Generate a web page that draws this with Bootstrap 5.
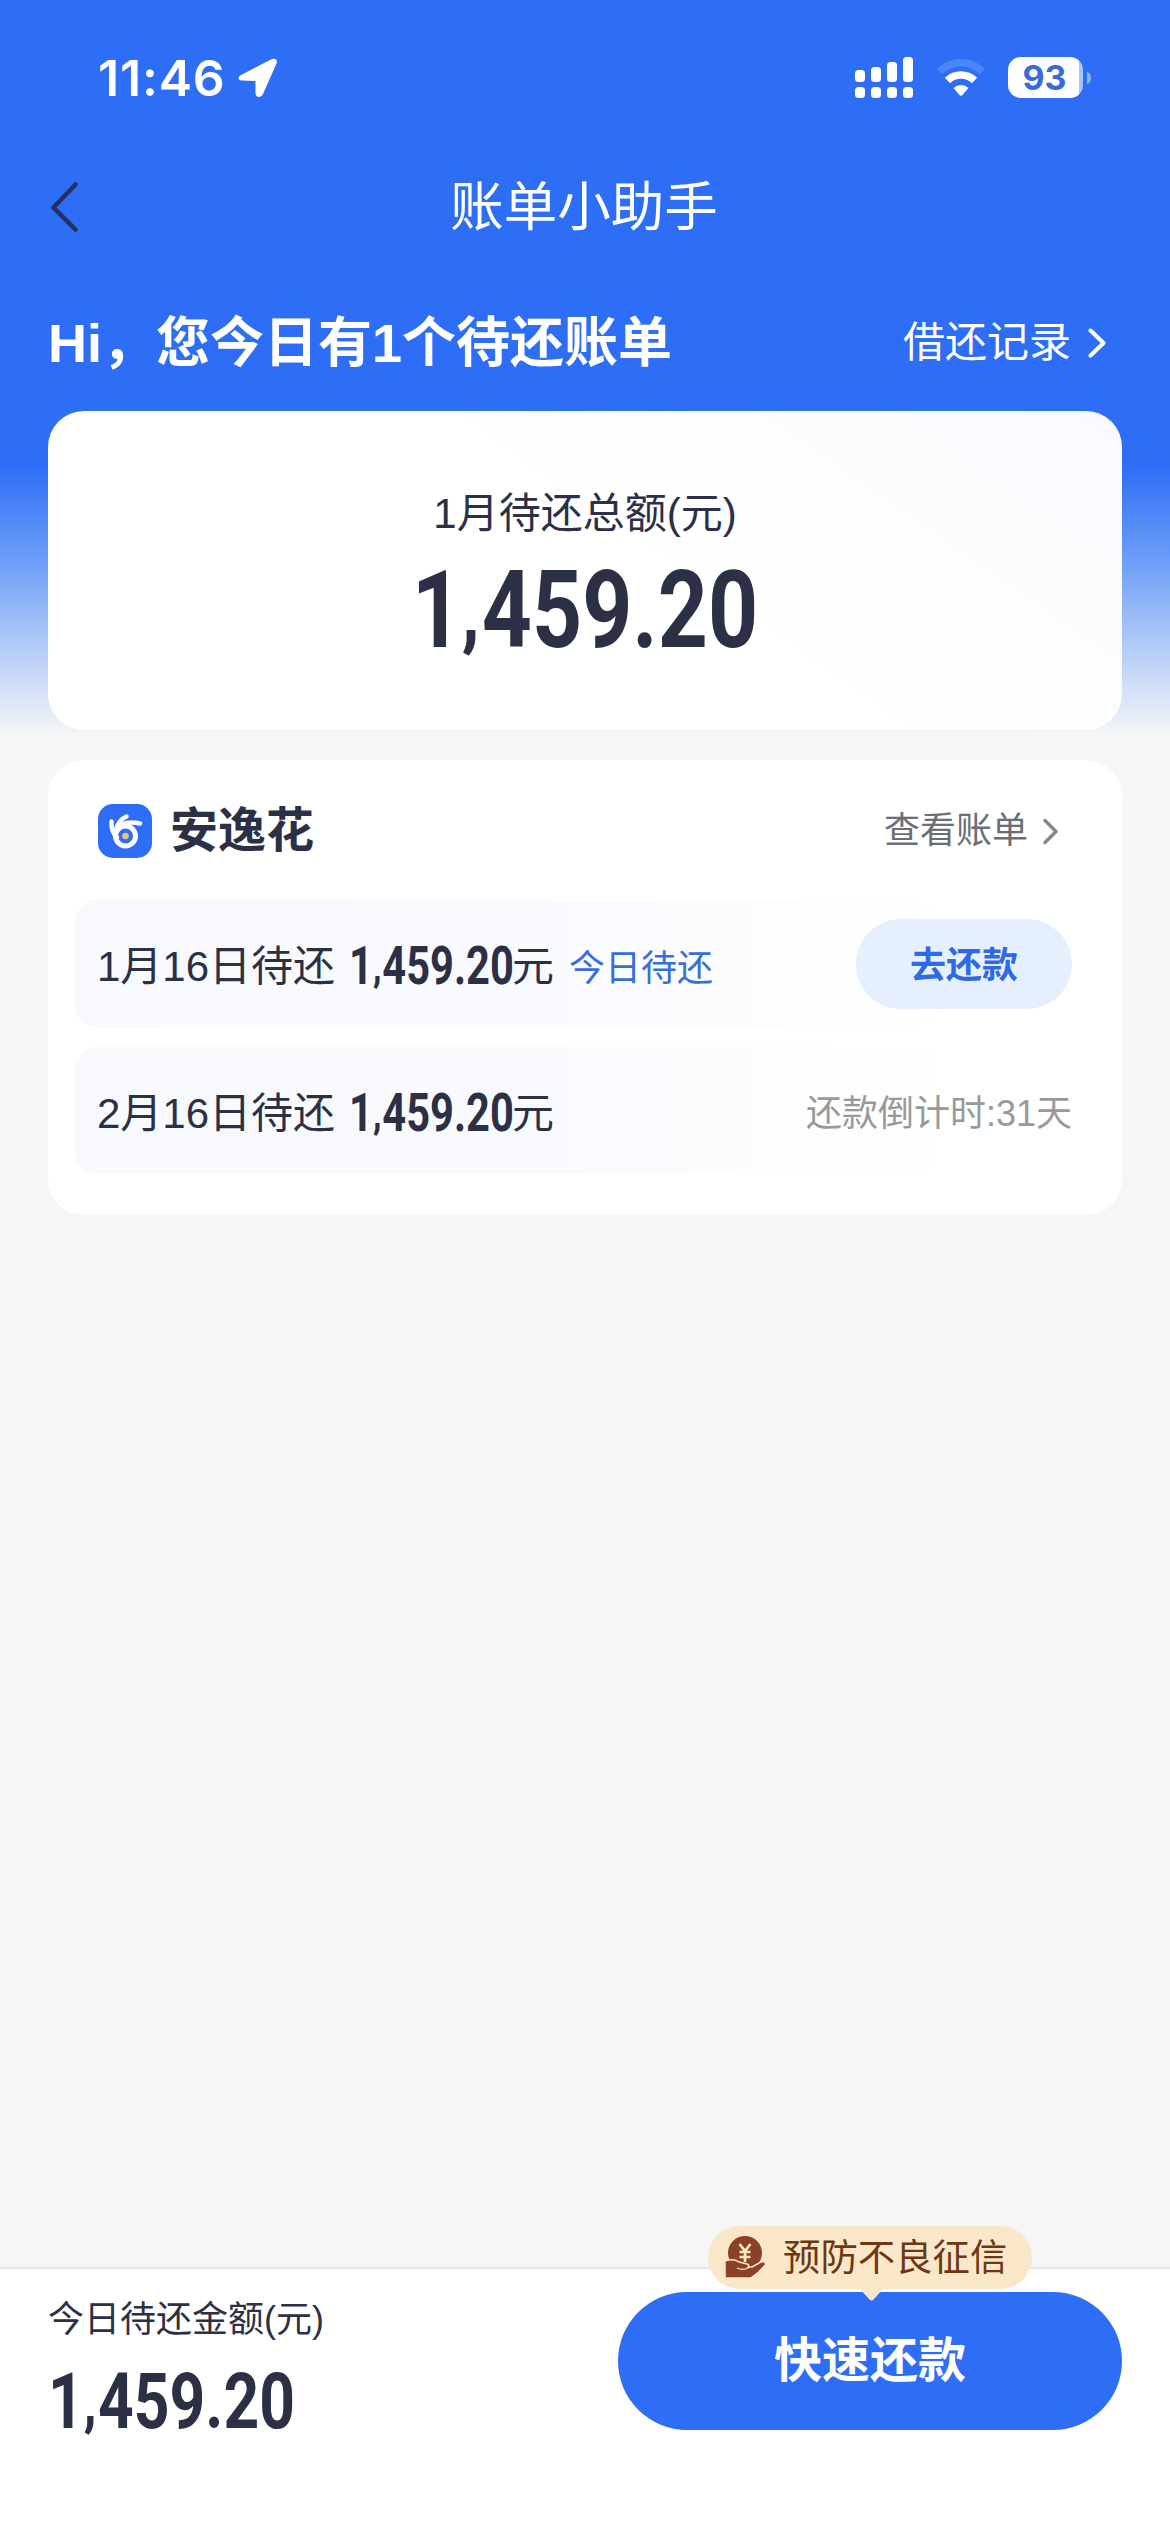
<!DOCTYPE html>
<html lang="zh-CN">
<head>
<meta charset="utf-8">
<meta name="viewport" content="width=device-width, initial-scale=1">
<title>账单小助手</title>
<link href="https://cdn.jsdelivr.net/npm/bootstrap@5.3.0/dist/css/bootstrap.min.css" rel="stylesheet">
<style>
  :root { --brand: #2e6ef6; --ink: #2b3045; }
  body {
    width: 1170px; height: 2532px; overflow: hidden; color: var(--ink);
    font-family: "Liberation Sans", "Noto Sans CJK SC", sans-serif;
    background: linear-gradient(180deg, var(--brand) 0, var(--brand) 465px, #6b9ef8 560px, #b9cff7 655px, #f5f6f7 735px) no-repeat 0 0 / 100% 735px #f6f6f6;
  }
  svg { display: block; flex: none; }
  .status-bar { height: 155px; padding: 0 79px 0 98px; }
  .clock { font: 600 50px/60px Inter, sans-serif; letter-spacing: .8px; }
  .locate { margin-left: 12px; }
  .wifi { margin: 0 22px 0 23px; }
  .battery { width: 75px; height: 41px; border-radius: 13px; background: linear-gradient(90deg, #fff 71px, #a9c4fb 71px); }
  .battery-level { font: 700 34px/42px Inter, "Liberation Sans", sans-serif; color: #3a69d8; width: 73px; }
  .title-bar { height: 103px; padding: 0 53px 0 51px; }
  .title-bar .fs-title { padding: 3px 27px 0 0; }
  .fs-title { font-size: 53.5px; line-height: 64px; }
  .fs-hi { font-size: 54px; line-height: 64px; }
  .fs-main { font-size: 42px; line-height: 50px; }
  .fs-brand { font-size: 48px; line-height: 56px; margin-left: 18px; }
  .fs-note { font-size: 36px; line-height: 44px; }
  .greeting { height: 153px; padding: 16px 64px 0 48px; }
  .panel { margin: 0 48px; border-radius: 36px; background: #fff; }
  .total-card { height: 319px; padding-top: 78px; background: linear-gradient(215deg, #f9fafe 0, #fff 45%); }
  .din { font-family: Roboto, sans-serif; font-weight: 700; display: inline-block; white-space: nowrap; }
  .din-sep { font-size: .76em; font-weight: 900; vertical-align: .09em; letter-spacing: .03em; }
  .din-xl { font-size: 108px; line-height: 120px; margin-top: 11px; transform: scaleX(.81); }
  .din-md { font-size: 53px; line-height: 56px; margin: 1px 0 0 14px; transform: scaleX(.785); transform-origin: left; width: 163px; }
  .din-lg { font-size: 77px; line-height: 84px; margin-top: 18px; transform: scaleX(.81); transform-origin: left; }
  .bill-card { height: 455px; margin-top: 30px; padding: 0 27px; }
  .bill-head { height: 140px; padding: 2px 36px 0 23px; }
  .bill-row { height: 127px; border-radius: 22px; padding: 0 23px 0 22px; background: linear-gradient(90deg, #f8f9fd 0, #f9fafe 45%, #fff 85%); }
  .bill-row + .bill-row { margin-top: 20px; }
  .bill-row span { padding-top: 7px; }
  .bill-row .din { padding-top: 6px; }
  .bill-row .text-brand { padding-top: 11px; margin-left: 15px; }
  .text-view { color: #6b6e78; }
  .text-wait { color: #999; }
  .text-brand { color: #366edb; }
  .btn-pay { width: 216px; height: 90px; border-radius: 45px; background: #e5effd; color: #2e69e6; font-size: 36px; line-height: 44px; padding: 4px 0 0; }
  .pay-bar { height: 265px; border-top: 2px solid #e6e7e8; padding: 23px 48px 0; background: #fff; }
  .pay-bar .fs-note { padding-top: 6px; }
  .btn-fast { width: 504px; height: 138px; border-radius: 69px; background: var(--brand); color: #fff; font-size: 48px; padding: 0; }
  .tip { top: -66px; left: 90px; width: 324px; height: 63px; border-radius: 32px; background: #fae7c9; color: #6e3712; font-size: 37.4px; line-height: 63px; padding-left: 17px; }
  .tip-text { margin-left: 17px; padding-top: 2px; }
  .tip-arrow { left: 151px; top: 62px; }
</style>
</head>
<body class="d-flex flex-column">
  <header class="text-white">
    <div class="status-bar d-flex align-items-center justify-content-between">
      <div class="d-flex align-items-center">
        <span class="clock">11:46</span>
        <svg class="locate" width="40" height="40" viewBox="0 0 40 40"><path d="M3 17 33 1.500c4-2 7 0 5.500 4L25 36c-2 4-7.500 4-7.500-1V23L4 22.500c-4.500 0-4.500-3.500-1-5.500z" fill="#fff"/></svg>
      </div>
      <div class="d-flex align-items-center">
        <svg width="58" height="41" viewBox="0 0 58 41" fill="#fff">
          <rect x="0" y="13" width="10" height="12" rx="3.500"/><rect x="16" y="10" width="10" height="15" rx="3.500"/><rect x="32" y="5" width="10" height="20" rx="3.500"/><rect x="48" y="0" width="10" height="25" rx="3.500"/>
          <rect x="0" y="30" width="10" height="11" rx="3.500"/><rect x="16" y="30" width="10" height="11" rx="3.500"/><rect x="32" y="30" width="10" height="11" rx="3.500"/><rect x="48" y="30" width="10" height="11" rx="3.500"/>
        </svg>
        <svg class="wifi" width="50" height="41" viewBox="0 0 50 41" fill="none">
          <path d="M3.500 14.500a31 31 0 0 1 43 0" stroke="#4a86f8" stroke-width="7.500"/>
          <path d="M11.500 23.500a19.500 19.500 0 0 1 27 0" stroke="#fff" stroke-width="7.500"/>
          <path d="M17.500 31a11 11 0 0 1 15 0L26.500 38q-1.500 1.500-3 0z" fill="#fff"/>
        </svg>
        <div class="battery d-flex"><span class="battery-level text-center">93</span></div>
        <svg class="ms-1" width="4" height="12" viewBox="0 0 4 12"><path d="M0 0q4 1 4 6t-4 6z" fill="#8fb3fb"/></svg>
      </div>
    </div>
    <nav class="title-bar d-flex align-items-center">
      <svg width="27" height="50" viewBox="0 0 27 50" fill="none" stroke="#25305c" stroke-width="4.500" stroke-linecap="round" stroke-linejoin="round"><path d="M24.500 2.500 2.500 25.500l22 22"/></svg>
      <span class="fs-title flex-fill text-center">账单小助手</span>
    </nav>
    <div class="greeting d-flex align-items-center justify-content-between">
      <span class="fs-hi fw-bold">Hi，您今日有1个待还账单</span>
      <span class="fs-main d-flex align-items-center">借还记录
        <svg style="margin-left:17px" width="18" height="30" viewBox="0 0 18 30" fill="none" stroke="#fff" stroke-width="4" stroke-linecap="round" stroke-linejoin="round"><path d="M2.500 2.500 15.500 15l-13 12.500"/></svg>
      </span>
    </div>
  </header>

  <main class="flex-fill">
    <section class="panel total-card d-flex flex-column align-items-center">
      <span class="fs-main">1月待还总额(元)</span>
      <span class="din din-xl">1<span class="din-sep">,</span>459.20</span>
    </section>

    <section class="panel bill-card">
      <div class="bill-head d-flex align-items-center">
        <svg width="54" height="54" viewBox="0 0 54 54">
          <rect width="54" height="54" rx="15" fill="#2e6ef6"/>
          <g fill="none" stroke="#fff" stroke-linecap="round">
            <circle cx="27.500" cy="32" r="10" stroke-width="5"/>
            <path d="M13.500 17.500q-.5 10 5.500 16" stroke-width="4.500"/>
            <path d="M18.500 24q2.500-8 10-11.500" stroke-width="4.500"/>
            <path d="M21 22.500q8-6 21-3" stroke-width="4.500"/>
          </g>
          <circle cx="27.500" cy="32" r="3.300" fill="#f5bd80"/>
        </svg>
        <span class="fs-brand fw-bold">安逸花</span>
        <span class="fs-note text-view ms-auto d-flex align-items-center">查看账单
          <svg style="margin-left:14px" width="17" height="27" viewBox="0 0 17 27" fill="none" stroke="#85878f" stroke-width="3.500" stroke-linecap="round" stroke-linejoin="round"><path d="M3 2.500 14 13.500 3 24.500"/></svg>
        </span>
      </div>
      <div class="bill-row d-flex align-items-center">
        <span class="fs-main">1月16日待还</span>
        <span class="din din-md">1<span class="din-sep">,</span>459.20</span>
        <span class="fs-main">元</span>
        <span class="fs-note text-brand">今日待还</span>
        <button type="button" class="btn btn-pay fw-bold ms-auto">去还款</button>
      </div>
      <div class="bill-row d-flex align-items-center">
        <span class="fs-main">2月16日待还</span>
        <span class="din din-md">1<span class="din-sep">,</span>459.20</span>
        <span class="fs-main">元</span>
        <span class="fs-note text-wait ms-auto">还款倒计时:31天</span>
      </div>
    </section>
  </main>

  <footer class="pay-bar d-flex justify-content-between align-items-start">
    <div class="d-flex flex-column">
      <span class="fs-note">今日待还金额(元)</span>
      <span class="din din-lg">1<span class="din-sep">,</span>459.20</span>
    </div>
    <div class="position-relative">
      <button type="button" class="btn btn-fast fw-bold">快速还款</button>
      <div class="tip position-absolute d-flex align-items-center">
        <svg width="41" height="43" viewBox="0 0 41 43">
          <circle cx="20" cy="17" r="17" fill="#8d4028"/>
          <path d="m14.500 8 5.500 7 5.500-7M20 15v11M14.500 16h11M14.500 21h11" fill="none" stroke="#fae7c9" stroke-width="2.700"/>
          <path d="M0 25q8-3 14 1l8 2q3 1 1 3h4l9-5q4-1 5 2-7 9-15 14H0z" fill="#8d4028" stroke="#fae7c9" stroke-width="1.500"/>
          <path d="M12 32q7 3 13-1" fill="none" stroke="#fae7c9" stroke-width="1.300"/>
        </svg>
        <span class="tip-text">预防不良征信</span>
        <svg class="tip-arrow position-absolute" width="25" height="13" viewBox="0 0 25 13"><path d="M0 0h25L14.500 11.500q-2 2-4 0z" fill="#fae7c9"/></svg>
      </div>
    </div>
  </footer>
<script src="https://cdn.jsdelivr.net/npm/bootstrap@5.3.0/dist/js/bootstrap.bundle.min.js"></script>
</body>
</html>
